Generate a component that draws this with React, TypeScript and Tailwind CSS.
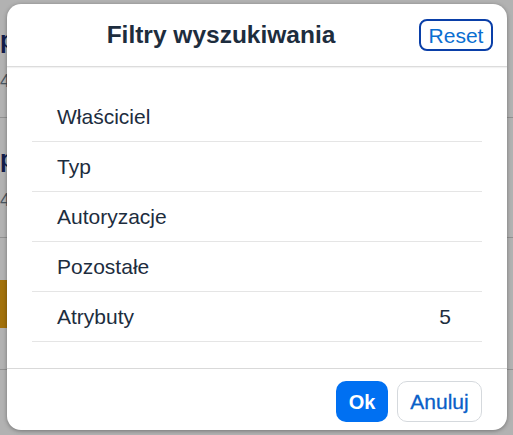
import React from "react";

const filters = [
  { label: "Właściciel", count: "" },
  { label: "Typ", count: "" },
  { label: "Autoryzacje", count: "" },
  { label: "Pozostałe", count: "" },
  { label: "Atrybuty", count: "5" },
];

export default function App() {
  return (
    <div className="relative w-[513px] h-[435px] overflow-hidden bg-white font-['Liberation_Sans',Arial,sans-serif]">
      {/* page behind the dialog */}
      <div className="flex flex-col">
        <div className="h-[118px] border-b border-[#d0d0d0] flex flex-col justify-center gap-5">
          <span className="text-[24px] font-bold text-[#1a2a6c] leading-none">p</span>
          <span className="text-[18px] text-[#6a7b8c] leading-none">4</span>
        </div>
        <div className="h-[120px] border-b border-[#d0d0d0] flex flex-col justify-center gap-5">
          <span className="text-[24px] font-bold text-[#1a2a6c] leading-none">p</span>
          <span className="text-[18px] text-[#6a7b8c] leading-none">4</span>
        </div>
        <div className="h-[132px] border-b border-[#d0d0d0] flex items-center">
          <div className="w-[40px] h-[48px] bg-[#e9a310]" />
        </div>
      </div>

      {/* overlay */}
      <div className="absolute inset-0 bg-black/30" />

      {/* dialog */}
      <div className="absolute left-[7px] top-[4px] w-[500px] h-[426px] bg-white rounded-[14px] shadow-[0_1px_4px_rgba(0,0,0,0.35)] flex flex-col overflow-hidden">
        <header className="h-[63px] shrink-0 flex items-center pl-4 pr-[14px] border-b border-[#dcdcdc] shadow-[0_1px_1px_rgba(0,0,0,0.05)]">
          <h1 className="flex-1 text-center text-[24.5px] font-bold text-[#1d2d3e] leading-none">
            Filtry wyszukiwania
          </h1>
          <button className="w-[74px] h-[32px] rounded-[8px] border-2 border-[#0a3fa8] text-[#0a6ed1] text-[21px] leading-none">
            Reset
          </button>
        </header>

        <main className="flex-1 px-[25px] pt-[25px]">
          <ul className="flex flex-col">
            {filters.map((f) => (
              <li
                key={f.label}
                className="h-[50px] flex items-center justify-between pl-[25px] pr-[31px] border-b border-[#e5e5e5] text-[21px] text-[#1d2d3e]"
              >
                <span>{f.label}</span>
                <span>{f.count}</span>
              </li>
            ))}
          </ul>
        </main>

        <footer className="h-[62px] shrink-0 border-t border-[#d9d9d9] flex items-start justify-end gap-[9px] pt-3 pr-[25px]">
          <button className="w-[52px] h-[41px] rounded-[10px] bg-[#0070f2] text-white text-[20px] font-bold">
            Ok
          </button>
          <button className="w-[85px] h-[41px] rounded-[10px] border border-[#d5d9dd] bg-white text-[#0a5fc8] text-[21px] [-webkit-text-stroke:0.3px_#0a5fc8]">
            Anuluj
          </button>
        </footer>
      </div>
    </div>
  );
}
